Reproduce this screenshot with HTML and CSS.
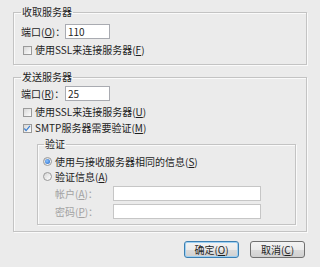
FILE: index.html
```html
<!DOCTYPE html>
<html lang="zh-CN">
<head>
  <meta charset="UTF-8" />
  <title>服务器设置</title>
  <link rel="stylesheet" href="styles.css">
</head>
<body>
  <div class="dialog">
    <fieldset class="group group-recv">
      <legend>收取服务器</legend>
      <div class="field-row">
        <label class="field-label">端口(<u>O</u>)：</label>
        <input class="text-input port-input" type="text" value="110" />
      </div>
      <div class="check-row">
        <span class="check"></span>
        <span>使用SSL来连接服务器(<u>F</u>)</span>
      </div>
    </fieldset>

    <fieldset class="group group-send">
      <legend>发送服务器</legend>
      <div class="field-row">
        <label class="field-label">端口(<u>R</u>)：</label>
        <input class="text-input port-input" type="text" value="25" />
      </div>
      <div class="check-row">
        <span class="check"></span>
        <span>使用SSL来连接服务器(<u>U</u>)</span>
      </div>
      <div class="check-row check-row-next">
        <span class="check checked">
          <svg width="9" height="9" viewBox="0 0 9 9"><polyline points="1.5,4.5 3.5,6.8 7.8,1.6" fill="none" stroke="#3b7fd0" stroke-width="1.4" /></svg>
        </span>
        <span>SMTP服务器需要验证(<u>M</u>)</span>
      </div>

      <fieldset class="group group-auth">
        <legend>验证</legend>
        <div class="radio-row">
          <span class="radio selected"></span>
          <span>使用与接收服务器相同的信息(<u>S</u>)</span>
        </div>
        <div class="radio-row">
          <span class="radio"></span>
          <span>验证信息(<u>A</u>)</span>
        </div>
        <div class="field-row cred-row">
          <label class="field-label cred-label">帐户(<u>A</u>)：</label>
          <input class="text-input cred-input" type="text" disabled />
        </div>
        <div class="field-row cred-row cred-row-next">
          <label class="field-label cred-label">密码(<u>P</u>)：</label>
          <input class="text-input cred-input" type="password" disabled />
        </div>
      </fieldset>
    </fieldset>

    <div class="button-row">
      <button class="btn btn-default">确定(<u>O</u>)</button>
      <button class="btn">取消(<u>C</u>)</button>
    </div>
  </div>
</body>
</html>
```

FILE: styles.css
```css
body {
  margin: 0;
  background-color: #ebebeb;
  font-family: "Noto Sans CJK SC", sans-serif;
  font-size: 10px;
  line-height: 12px;
  color: #1e1e1e;
}

.dialog {
  padding: 6px 13px 0 13px;
}

.group {
  margin: 0;
  min-width: 0;
  border: 1px solid #c3c3c3;
  box-shadow: inset 1px 1px 0 #fafafa, 1px 1px 0 #fafafa;
  padding: 0 10px 6px 7px;
}

.group legend {
  padding: 0 1px;
  height: 12px;
  line-height: 12px;
}

.group-recv {
  padding-top: 6px;
}

.group-send {
  margin-top: 6px;
  padding-top: 3px;
}

.group-auth {
  margin: 2px 0 0 16px;
  padding: 4px 0 5px 5px;
}

.group-auth legend {
  margin-left: 1px;
}

.field-row {
  display: flex;
  align-items: center;
  height: 15px;
}

.field-label {
  width: 44px;
  white-space: nowrap;
}

.text-input {
  box-sizing: border-box;
  height: 15px;
  margin: 0;
  padding: 0 2px;
  border: 1px solid #a9abb1;
  background-color: #fff;
  font-family: "Noto Sans CJK SC", sans-serif;
  font-size: 10px;
  color: #1e1e1e;
  outline: none;
}

.port-input {
  width: 45px;
}

.check-row {
  display: flex;
  align-items: center;
  gap: 3px;
  height: 16px;
  margin-top: 3px;
  padding-left: 2px;
}

.check-row-next {
  margin-top: 0;
}

.check {
  box-sizing: border-box;
  width: 9px;
  height: 9px;
  border: 1px solid #9a9a9a;
  background: linear-gradient(135deg, #d8d8d8, #fdfdfd);
  display: flex;
}

.check svg {
  margin: -1px 0 0 -1px;
}

.radio-row {
  display: flex;
  align-items: center;
  gap: 3px;
  height: 15px;
}

.radio {
  box-sizing: border-box;
  width: 9px;
  height: 9px;
  border: 1px solid #9a9a9a;
  border-radius: 50%;
  background: linear-gradient(135deg, #d6d6d6, #ffffff);
  display: flex;
  align-items: center;
  justify-content: center;
}

.radio.selected::after {
  content: "";
  width: 5px;
  height: 5px;
  border-radius: 50%;
  background: radial-gradient(circle at 40% 40%, #8cc4ff, #1f63c4);
}

.cred-row {
  margin-top: 2px;
  padding-left: 12px;
}

.cred-row-next {
  margin-top: 3px;
}

.cred-label {
  width: 58px;
  color: #a2a2a2;
}

.cred-input {
  width: 148px;
  border-color: #c6c6c6;
}

.button-row {
  display: flex;
  justify-content: flex-end;
  gap: 11px;
  margin-top: 9px;
  padding-right: 2px;
}

.btn {
  box-sizing: border-box;
  width: 55px;
  height: 17px;
  margin: 0;
  padding: 0;
  border: 1px solid #707070;
  border-radius: 3px;
  background: linear-gradient(#f3f3f3 0%, #ebebeb 50%, #dcdcdc 51%, #d0d0d0 100%);
  font-family: "Noto Sans CJK SC", sans-serif;
  font-size: 10px;
  line-height: 13px;
  color: #1e1e1e;
}

.btn-default {
  border-color: #3c7fb1;
  box-shadow: inset 0 0 0 1px #9fd0f2;
}
```
